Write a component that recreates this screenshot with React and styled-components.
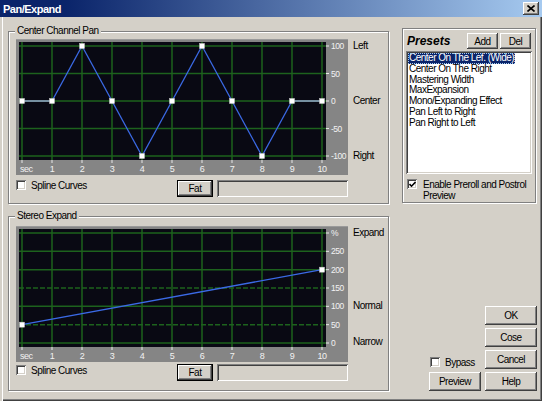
import React from 'react';
import styled, { createGlobalStyle } from 'styled-components';

const GlobalStyle = createGlobalStyle`
  html, body {
    margin: 0;
    padding: 0;
    background: #d4d0c8;
  }
  body {
    font-family: "Liberation Sans", Arial, sans-serif;
    font-size: 10px;
    letter-spacing: -0.5px;
    color: #000;
  }
`;

const Window = styled.div`
  width: 542px;
  height: 401px;
  box-sizing: border-box;
  background: #d4d0c8;
  display: flex;
  flex-direction: column;
  overflow: hidden;
  box-shadow: inset 2px 0 0 #d4d0c8, inset 3px 0 0 #fff, inset -1px -1px 0 #404040, inset -2px -2px 0 #808080;
`;

const TitleBar = styled.div`
  flex: none;
  height: 17px;
  display: flex;
  align-items: center;
  justify-content: space-between;
  padding: 0 3px 0 3px;
  background: linear-gradient(90deg, #0a246a 0%, #0a246a 12%, #a6caf0 100%);
  color: #fff;
  font-weight: bold;
  font-size: 11px;
  letter-spacing: -0.5px;
`;

const CloseButton = styled.div`
  width: 16px;
  height: 13px;
  display: flex;
  align-items: center;
  justify-content: center;
  background: #d4d0c8;
  box-shadow: inset -1px -1px 0 #404040, inset 1px 1px 0 #fff, inset -2px -2px 0 #808080;
`;

const Body = styled.div`
  flex: 1;
  display: flex;
  gap: 13px;
  padding: 0 5px 10px 8px;
`;

const LeftColumn = styled.div`
  width: 381px;
  display: flex;
  flex-direction: column;
  gap: 12px;
  padding-top: 14px;
`;

const RightColumn = styled.div`
  width: 135px;
  display: flex;
  flex-direction: column;
  justify-content: space-between;
  padding-top: 11px;
`;

const GroupBox = styled.div`
  position: relative;
  box-sizing: border-box;
  height: ${(p) => p.$h}px;
  border: 1px solid #808080;
  box-shadow: 1px 1px 0 #fff, inset 1px 1px 0 #fff;
  padding: ${(p) => p.$pt}px 0 0 7px;
  display: flex;
  gap: 5px;
`;

const Legend = styled.span`
  position: absolute;
  top: -7px;
  left: 6px;
  padding: 0 2px;
  line-height: 12px;
  background: #d4d0c8;
`;

const GraphColumn = styled.div`
  width: 332px;
  display: flex;
  flex-direction: column;
  gap: ${(p) => p.$gap}px;
`;

const ChartFrame = styled.svg`
  display: block;
  font-family: "Liberation Sans", Arial, sans-serif;
  letter-spacing: -0.5px;
`;

const ControlRow = styled.div`
  display: flex;
  height: 17px;
`;

const CheckLabel = styled.label`
  display: flex;
  align-items: center;
  gap: 5px;
  width: ${(p) => (p.$w ? `${p.$w}px` : 'auto')};
  height: 10px;
  margin-top: ${(p) => p.$mt || 0}px;
  line-height: 11px;
`;

const CheckBox = styled.span`
  flex: none;
  width: 10px;
  height: 10px;
  box-sizing: border-box;
  background: #fff;
  display: flex;
  align-items: center;
  justify-content: center;
  box-shadow: inset 1px 1px 0 #808080, inset -1px -1px 0 #fff, inset 2px 2px 0 #404040, inset -2px -2px 0 #d4d0c8;
`;

const Button = styled.button`
  font: inherit;
  letter-spacing: inherit;
  color: #000;
  background: #d4d0c8;
  width: ${(p) => p.$w}px;
  height: ${(p) => p.$h || 19}px;
  margin: 0;
  padding: 0;
  border: ${(p) => (p.$default ? '1px solid #000' : 'none')};
  box-sizing: border-box;
  box-shadow: inset -1px -1px 0 #404040, inset 1px 1px 0 #fff, inset -2px -2px 0 #808080;
  cursor: default;
`;

const Field = styled.div`
  flex: 1;
  margin-left: 4px;
  height: 17px;
  box-sizing: border-box;
  background: #d4d0c8;
  box-shadow: inset 1px 1px 0 #808080, inset -1px -1px 0 #fff, inset 2px 2px 0 #404040, inset -2px -2px 0 #d4d0c8;
`;

const SideLabels = styled.div`
  display: flex;
  flex-direction: column;
`;

const SideLabel = styled.span`
  line-height: 12px;
  margin-top: ${(p) => p.$mt}px;
`;

const PresetsBox = styled.div`
  box-sizing: border-box;
  width: 134px;
  height: 175px;
  border: 1px solid #808080;
  box-shadow: 1px 1px 0 #fff, inset 1px 1px 0 #fff;
  padding: 4px 3px 0 3px;
  display: flex;
  flex-direction: column;
`;

const PresetsHeader = styled.div`
  display: flex;
  align-items: center;
  gap: 2px;
  height: 16px;
`;

const PresetsTitle = styled.span`
  font-size: 12px;
  font-weight: bold;
  font-style: italic;
  letter-spacing: 0;
  margin-left: 1px;
  margin-right: auto;
`;

const PresetList = styled.div`
  margin-top: 2px;
  height: 123px;
  box-sizing: border-box;
  background: #fff;
  padding: 2px 2px;
  display: flex;
  flex-direction: column;
  align-items: flex-start;
  box-shadow: inset 1px 1px 0 #808080, inset -1px -1px 0 #fff, inset 2px 2px 0 #404040, inset -2px -2px 0 #d4d0c8;
`;

const PresetItem = styled.span`
  line-height: 10.8px;
  padding: 0 1px;
  white-space: nowrap;
  background: ${(p) => (p.$selected ? '#0a246a' : 'transparent')};
  color: ${(p) => (p.$selected ? '#fff' : '#000')};
  outline: ${(p) => (p.$selected ? '1px dotted #a6caf0' : 'none')};
  outline-offset: -1px;
`;

const PreviewCheck = styled.label`
  display: flex;
  align-items: flex-start;
  gap: 6px;
  margin: 5px 0 0 1px;
  line-height: 11px;
`;

const ActionGrid = styled.div`
  align-self: flex-end;
  display: grid;
  grid-template-columns: 52px 52px;
  grid-template-rows: repeat(4, 19px);
  gap: 3px 4px;
`;

const GridCell = styled.div`
  grid-column: ${(p) => p.$col};
  grid-row: ${(p) => p.$row};
  align-self: end;
  justify-self: start;
  display: flex;
`;

const xAt = (i) => 6 + i * 30;
const panY = (v) => 62 - v * 0.55;
const expY = (v) => 117 - (v * 110) / 300;

const panRows = [100, 50, 0, -50, -100].map((v) => ({ y: panY(v), label: String(v) }));
const expandRows = [300, 250, 200, 150, 100, 50, 0].map((v) => ({
  y: expY(v),
  label: v === 300 ? '%' : String(v),
  dashed: v === 150 || v === 50,
}));

const panValues = [0, 0, 100, 0, -100, 0, 100, 0, -100, 0, 0];
const panPoints = panValues.map((v, i) => ({ x: xAt(i), y: panY(v), v }));
const expandPoints = [
  { x: xAt(0), y: expY(50), v: 50 },
  { x: xAt(10), y: expY(200), v: 200 },
];

const axisLabels = ['sec', '1', '2', '3', '4', '5', '6', '7', '8', '9', '10'];

const Chart = ({ rows, points }) => (
  <ChartFrame width="332" height="136" viewBox="0 0 332 136">
    <rect width="332" height="136" fill="#858585" />
    <rect x="0" y="0" width="332" height="1" fill="#9a9a9a" />
    <rect x="3" y="3" width="307" height="118" fill="#090913" />
    {axisLabels.map((_, i) => (
      <line key={`v${i}`} x1={xAt(i)} x2={xAt(i)} y1="3" y2="121" stroke="#1d621d" strokeWidth="1.5" />
    ))}
    {rows.map((r) => (
      <line
        key={`h${r.label}`}
        x1="3"
        x2="310"
        y1={r.y}
        y2={r.y}
        stroke="#1d621d"
        strokeWidth="1.5"
        strokeDasharray={r.dashed ? '5 2' : undefined}
      />
    ))}
    {rows.map((r) => (
      <g key={`t${r.label}`}>
        <line x1="310" x2="313" y1={r.y} y2={r.y} stroke="#e8e8e8" strokeWidth="1" />
        <text x="315" y={r.y + 3} fontSize="8.5" fill="#f2f2f2">{r.label}</text>
      </g>
    ))}
    {axisLabels.map((l, i) => (
      <g key={`a${l}`}>
        <line x1={xAt(i)} x2={xAt(i)} y1="121" y2="124" stroke="#e8e8e8" strokeWidth="1" />
        <text
          x={i === 0 ? 4 : xAt(i)}
          y="133"
          fontSize="9"
          fill="#f2f2f2"
          textAnchor={i === 0 ? 'start' : 'middle'}
        >
          {l}
        </text>
      </g>
    ))}
    {points.slice(1).map((p, i) => {
      const a = points[i];
      const flat = a.v === p.v && a.y === p.y;
      return (
        <line
          key={`s${i}`}
          x1={a.x}
          y1={a.y}
          x2={p.x}
          y2={p.y}
          stroke={flat ? '#aab6ec' : '#3b6ae6'}
          strokeWidth="1.3"
        />
      );
    })}
    {points.map((p, i) => (
      <rect key={`p${i}`} x={p.x - 2.5} y={p.y - 2.5} width="5" height="5" fill="#fff" stroke="#c8c8c8" strokeWidth="0.5" />
    ))}
  </ChartFrame>
);

const presets = [
  'Center On The Lef. (Wide)',
  'Center On The Right',
  'Mastering Width',
  'MaxExpansion',
  'Mono/Expanding Effect',
  'Pan Left to Right',
  'Pan Right to Left',
];

const CheckMark = () => (
  <svg width="7" height="7" viewBox="0 0 7 7">
    <polyline points="0.5,3 2.5,5.2 6.5,1" fill="none" stroke="#000" strokeWidth="1.6" />
  </svg>
);

const App = () => (
  <>
    <GlobalStyle />
    <Window>
      <TitleBar>
        <span>Pan/Expand</span>
        <CloseButton>
          <svg width="8" height="7" viewBox="0 0 8 7">
            <path d="M0.5 0.5 L7.5 6.5 M7.5 0.5 L0.5 6.5" stroke="#000" strokeWidth="1.6" />
          </svg>
        </CloseButton>
      </TitleBar>
      <Body>
        <LeftColumn>
          <GroupBox $h={173} $pt={7}>
            <Legend>Center Channel Pan</Legend>
            <GraphColumn $gap={5}>
              <Chart rows={panRows} points={panPoints} />
              <ControlRow>
                <CheckLabel $w={161}>
                  <CheckBox />
                  Spline Curves
                </CheckLabel>
                <Button $w={36} $h={17} $default>Fat</Button>
                <Field />
              </ControlRow>
            </GraphColumn>
            <SideLabels>
              <SideLabel $mt={1}>Left</SideLabel>
              <SideLabel $mt={43}>Center</SideLabel>
              <SideLabel $mt={43}>Right</SideLabel>
            </SideLabels>
          </GroupBox>
          <GroupBox $h={175} $pt={9}>
            <Legend>Stereo Expand</Legend>
            <GraphColumn $gap={2}>
              <Chart rows={expandRows} points={expandPoints} />
              <ControlRow>
                <CheckLabel $w={161} $mt={1}>
                  <CheckBox />
                  Spline Curves
                </CheckLabel>
                <Button $w={36} $h={17} $default>Fat</Button>
                <Field />
              </ControlRow>
            </GraphColumn>
            <SideLabels>
              <SideLabel $mt={1}>Expand</SideLabel>
              <SideLabel $mt={61}>Normal</SideLabel>
              <SideLabel $mt={24}>Narrow</SideLabel>
            </SideLabels>
          </GroupBox>
        </LeftColumn>
        <RightColumn>
          <PresetsBox>
            <PresetsHeader>
              <PresetsTitle>Presets</PresetsTitle>
              <Button $w={31} $h={16}>Add</Button>
              <Button $w={31} $h={16} style={{ marginRight: 1 }}>Del</Button>
            </PresetsHeader>
            <PresetList>
              {presets.map((p, i) => (
                <PresetItem key={p} $selected={i === 0}>{p}</PresetItem>
              ))}
            </PresetList>
            <PreviewCheck>
              <CheckBox>
                <CheckMark />
              </CheckBox>
              <span>
                Enable Preroll and Postrol
                <br />
                Preview
              </span>
            </PreviewCheck>
          </PresetsBox>
          <ActionGrid>
            <GridCell $col={2} $row={1}><Button $w={52}>OK</Button></GridCell>
            <GridCell $col={2} $row={2}><Button $w={52}>Cose</Button></GridCell>
            <GridCell $col={1} $row={3} style={{ marginLeft: 1, marginBottom: 2 }}>
              <CheckLabel>
                <CheckBox />
                Bypass
              </CheckLabel>
            </GridCell>
            <GridCell $col={2} $row={3}><Button $w={52}>Cancel</Button></GridCell>
            <GridCell $col={1} $row={4}><Button $w={52}>Preview</Button></GridCell>
            <GridCell $col={2} $row={4}><Button $w={52}>Help</Button></GridCell>
          </ActionGrid>
        </RightColumn>
      </Body>
    </Window>
  </>
);

export default App;
